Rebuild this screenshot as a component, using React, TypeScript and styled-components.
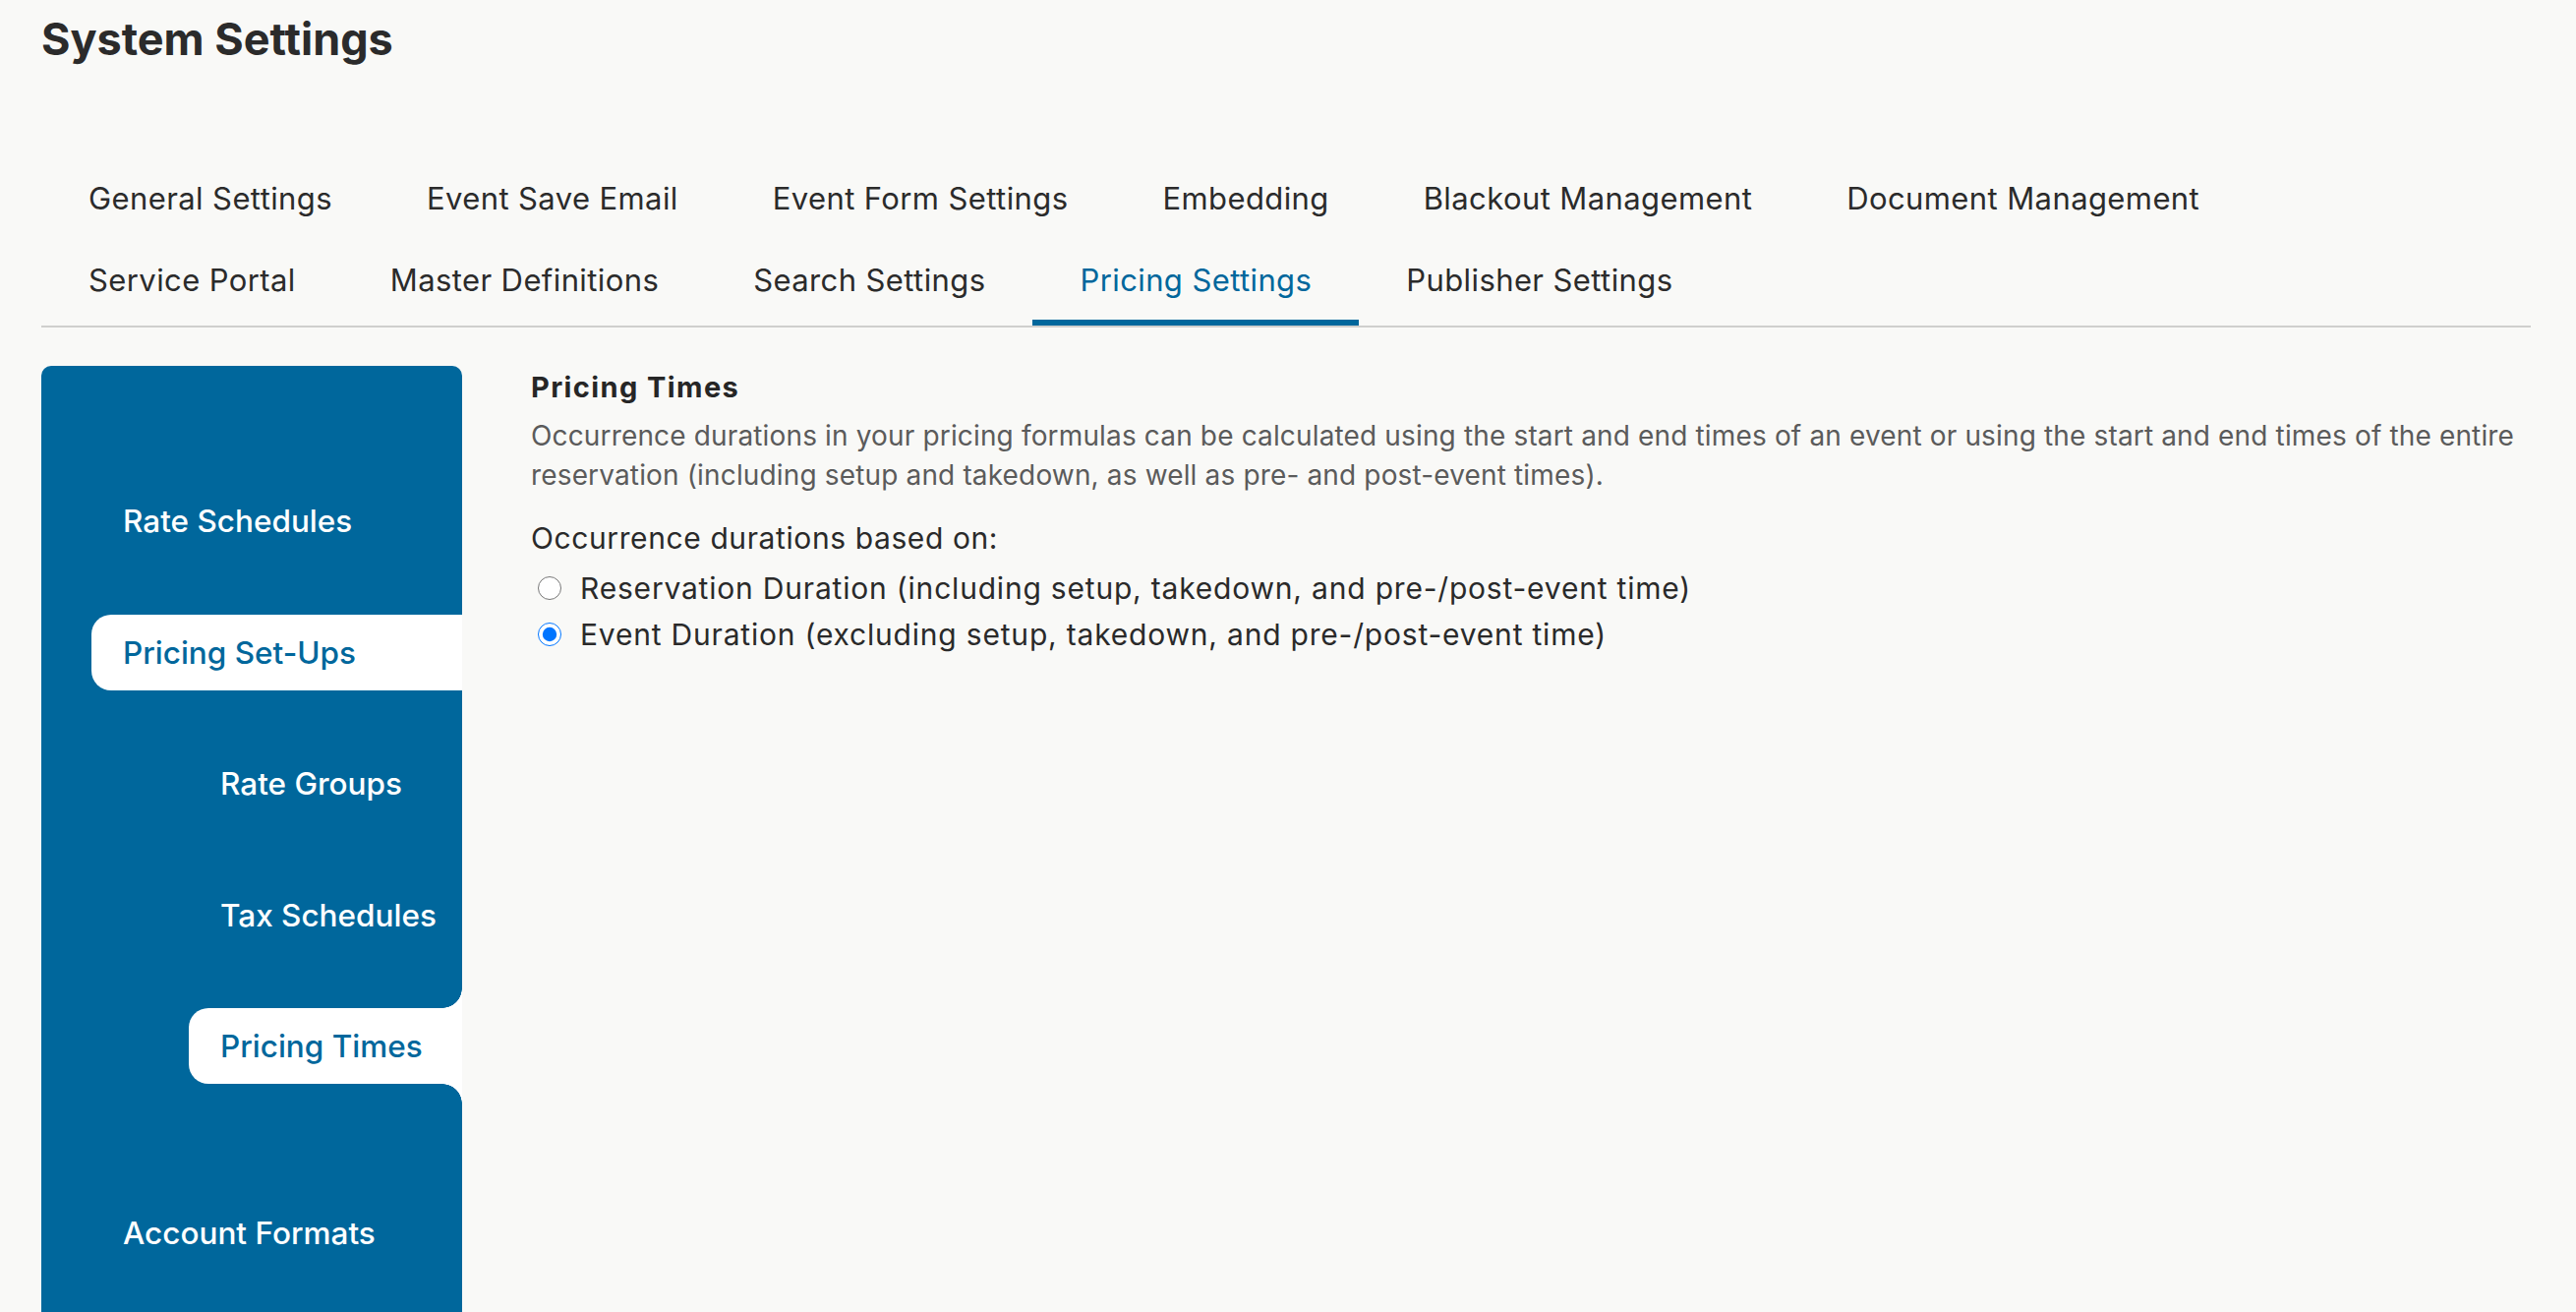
import styled, { createGlobalStyle } from "styled-components";

const BLUE = "#00679c";
const PAGE_BG = "#f9f9f7";

const GlobalStyle = createGlobalStyle`
  * { box-sizing: border-box; }
  html, body {
    margin: 0;
    background: ${PAGE_BG};
    font-family: Inter, "Liberation Sans", Arial, sans-serif;
  }
`;

const Page = styled.div`
  display: flex;
  flex-direction: column;
  min-height: 100vh;
  padding: 17px 46px 0 42px;
`;

const Title = styled.h1`
  margin: 0;
  font-size: 45px;
  line-height: 46px;
  font-weight: 700;
  color: #2b2b2b;
`;

const TabBar = styled.div`
  margin-top: 102px;
  border-bottom: 2px solid #cfcfcd;
`;

const TabRow = styled.div`
  display: flex;
`;

const Tab = styled.div<{ $active?: boolean }>`
  padding: 0 48px 4px;
  line-height: 73px;
  font-size: 31px;
  letter-spacing: 0.4px;
  white-space: nowrap;
  color: ${(p) => (p.$active ? BLUE : "#2b2b2b")};
  border-bottom: 6px solid ${(p) => (p.$active ? BLUE : "transparent")};
  cursor: pointer;
`;

const Body = styled.div`
  flex: 1;
  display: flex;
  margin-top: 39px;
`;

const Sidebar = styled.nav`
  width: 428px;
  flex-shrink: 0;
  background: ${BLUE};
  border-radius: 10px 10px 0 0;
  padding-top: 119px;
  display: flex;
  flex-direction: column;
  gap: 56.5px;
`;

const NavItem = styled.div<{ $level: number; $active?: boolean; $leaf?: boolean; $spaced?: boolean }>`
  position: relative;
  height: 77px;
  line-height: 77px;
  font-size: 31.5px;
  font-weight: 500;
  margin-left: ${(p) => (p.$level === 2 ? 150 : 51)}px;
  margin-top: ${(p) => (p.$spaced ? 56.5 : 0)}px;
  padding-left: 32px;
  white-space: nowrap;
  color: ${(p) => (p.$active ? BLUE : "#ffffff")};
  background: ${(p) => (p.$active ? "#ffffff" : "transparent")};
  border-radius: 20px 0 0 20px;
  cursor: pointer;

  ${(p) =>
    p.$leaf &&
    `
    &::before, &::after {
      content: "";
      position: absolute;
      right: 0;
      width: 20px;
      height: 20px;
    }
    &::before {
      top: -20px;
      background: radial-gradient(circle at top left, ${BLUE} 19.5px, #ffffff 20px);
    }
    &::after {
      bottom: -20px;
      background: radial-gradient(circle at bottom left, ${BLUE} 19.5px, #ffffff 20px);
    }
  `}
`;

const Content = styled.section`
  flex: 1;
  padding: 4px 0 0 70px;
`;

const Heading = styled.h2`
  margin: 0;
  font-size: 29px;
  line-height: 36px;
  letter-spacing: 1.4px;
  font-weight: 700;
  color: #262626;
`;

const Description = styled.p`
  margin: 11px 0 0;
  font-size: 28px;
  line-height: 40px;
  letter-spacing: 0.15px;
  color: #5b5b5b;
`;

const FieldLabel = styled.div`
  margin-top: 24px;
  font-size: 30px;
  line-height: 40px;
  letter-spacing: 0.6px;
  color: #2a2a2a;
`;

const RadioGroup = styled.div`
  margin-top: 7px;
  display: flex;
  flex-direction: column;
`;

const RadioRow = styled.label`
  display: flex;
  align-items: center;
  height: 47px;
  font-size: 30px;
  letter-spacing: 0.8px;
  color: #2a2a2a;
  cursor: pointer;
`;

const Radio = styled.input`
  width: 24px;
  height: 24px;
  margin: 0 19px 0 7px;
  accent-color: #0075ff;
`;

const tabRows = [
  [
    "General Settings",
    "Event Save Email",
    "Event Form Settings",
    "Embedding",
    "Blackout Management",
    "Document Management",
  ],
  ["Service Portal", "Master Definitions", "Search Settings", "Pricing Settings", "Publisher Settings"],
];

const navItems = [
  { label: "Rate Schedules", level: 1 },
  { label: "Pricing Set-Ups", level: 1, active: true },
  { label: "Rate Groups", level: 2 },
  { label: "Tax Schedules", level: 2 },
  { label: "Pricing Times", level: 2, active: true, leaf: true },
  { label: "Account Formats", level: 1, spaced: true },
];

export default function App() {
  return (
    <>
      <GlobalStyle />
      <Page>
        <Title>System Settings</Title>
        <TabBar>
          {tabRows.map((row, i) => (
            <TabRow key={i}>
              {row.map((t) => (
                <Tab key={t} $active={t === "Pricing Settings"}>
                  {t}
                </Tab>
              ))}
            </TabRow>
          ))}
        </TabBar>
        <Body>
          <Sidebar>
            {navItems.map((n) => (
              <NavItem
                key={n.label}
                $level={n.level}
                $active={n.active}
                $leaf={n.leaf}
                $spaced={n.spaced}
              >
                {n.label}
              </NavItem>
            ))}
          </Sidebar>
          <Content>
            <Heading>Pricing Times</Heading>
            <Description>
              Occurrence durations in your pricing formulas can be calculated using the start and end
              times of an event or using the start and end times of the entire reservation (including
              setup and takedown, as well as pre- and post-event times).
            </Description>
            <FieldLabel>Occurrence durations based on:</FieldLabel>
            <RadioGroup>
              <RadioRow>
                <Radio type="radio" name="duration" value="reservation" />
                Reservation Duration (including setup, takedown, and pre-/post-event time)
              </RadioRow>
              <RadioRow>
                <Radio type="radio" name="duration" value="event" defaultChecked />
                Event Duration (excluding setup, takedown, and pre-/post-event time)
              </RadioRow>
            </RadioGroup>
          </Content>
        </Body>
      </Page>
    </>
  );
}
